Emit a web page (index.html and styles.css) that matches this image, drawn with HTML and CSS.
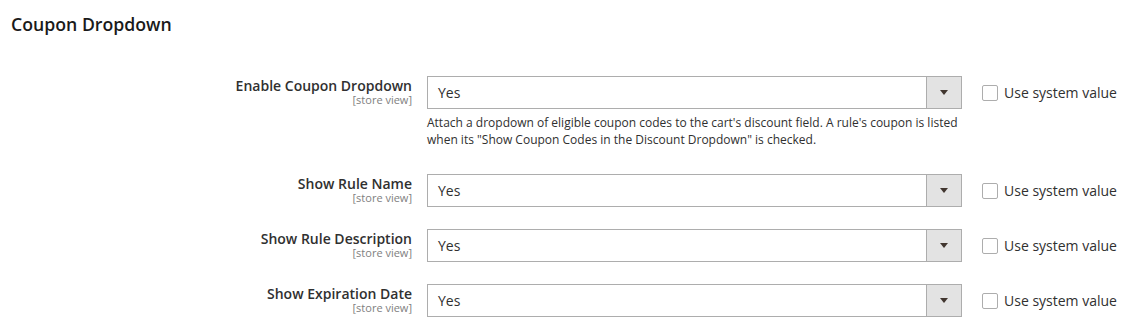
FILE: index.html
```html
<!DOCTYPE html>
<html>
<head>
<meta charset="utf-8">
<link rel="stylesheet" href="styles.css">
</head>
<body>
<div class="page">
  <h2 class="title">Coupon Dropdown</h2>
  <div class="rows">
    <div class="row">
      <div class="label"><span class="name">Enable Coupon Dropdown</span><span class="scope">[store view]</span></div>
      <div class="value">
        <div class="select"><span class="sel-text">Yes</span><span class="sel-btn"><span class="arrow"></span></span></div>
        <p class="note">Attach a dropdown of eligible coupon codes to the cart's discount field. A rule's coupon is listed when its "Show Coupon Codes in the Discount Dropdown" is checked.</p>
      </div>
      <label class="use-default"><span class="box"></span><span>Use system value</span></label>
    </div>
    <div class="row">
      <div class="label"><span class="name">Show Rule Name</span><span class="scope">[store view]</span></div>
      <div class="value">
        <div class="select"><span class="sel-text">Yes</span><span class="sel-btn"><span class="arrow"></span></span></div>
      </div>
      <label class="use-default"><span class="box"></span><span>Use system value</span></label>
    </div>
    <div class="row">
      <div class="label"><span class="name">Show Rule Description</span><span class="scope">[store view]</span></div>
      <div class="value">
        <div class="select"><span class="sel-text">Yes</span><span class="sel-btn"><span class="arrow"></span></span></div>
      </div>
      <label class="use-default"><span class="box"></span><span>Use system value</span></label>
    </div>
    <div class="row">
      <div class="label"><span class="name">Show Expiration Date</span><span class="scope">[store view]</span></div>
      <div class="value">
        <div class="select"><span class="sel-text">Yes</span><span class="sel-btn"><span class="arrow"></span></span></div>
      </div>
      <label class="use-default"><span class="box"></span><span>Use system value</span></label>
    </div>
  </div>
</div>
</body>
</html>
```
FILE: styles.css
```css
html, body {
  margin: 0;
  padding: 0;
  background: #ffffff;
}
body {
  font-family: "Open Sans", "DejaVu Sans", sans-serif;
  color: #303030;
  font-size: 14px;
}
.page {
  width: 1145px;
}
.title {
  margin: 0;
  padding: 12px 0 0 11px;
  font-size: 17.7px;
  font-weight: 600;
  line-height: 24px;
  color: #1a1a1a;
}
.rows {
  padding-top: 40px;
  display: flex;
  flex-direction: column;
  gap: 22px;
}
.row {
  display: flex;
  align-items: flex-start;
}
.label {
  width: 412px;
  text-align: right;
  display: flex;
  flex-direction: column;
  align-items: flex-end;
  padding-top: 1px;
}
.name {
  font-weight: 600;
  font-size: 14px;
  line-height: 17px;
  color: #303030;
}
.scope {
  font-size: 11px;
  line-height: 12px;
  color: #808080;
}
.value {
  width: 535px;
  margin-left: 15px;
}
.select {
  height: 33px;
  box-sizing: border-box;
  border: 1px solid #adadad;
  display: flex;
  align-items: center;
  background: #fff;
}
.sel-text {
  flex: 1;
  padding-left: 10px;
  font-size: 14px;
  color: #303030;
}
.sel-btn {
  width: 34px;
  height: 100%;
  background: #e3e3e3;
  border-left: 1px solid #adadad;
  display: flex;
  align-items: center;
  justify-content: center;
}
.arrow {
  width: 0;
  height: 0;
  border-left: 4px solid transparent;
  border-right: 4px solid transparent;
  border-top: 5px solid #41362f;
}
.note {
  margin: 5px 0 4px;
  font-size: 12px;
  line-height: 17px;
  color: #303030;
}
.use-default {
  margin-left: 20px;
  padding-top: 9px;
  display: flex;
  align-items: center;
  gap: 6px;
  font-size: 14px;
  line-height: 16px;
  color: #303030;
}
.box {
  width: 16px;
  height: 16px;
  box-sizing: border-box;
  border: 1px solid #adadad;
  border-radius: 2px;
  background: #fff;
}
```
